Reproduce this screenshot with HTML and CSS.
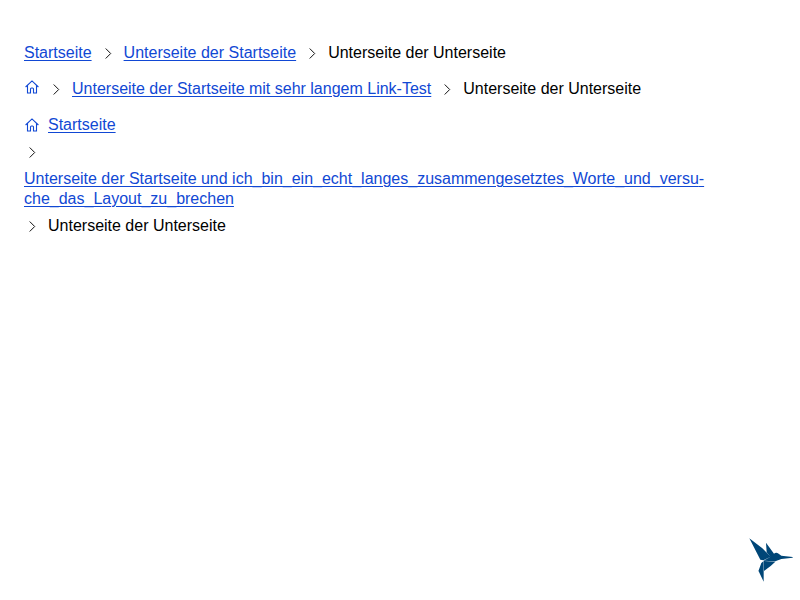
FILE: index.html
```html
<!DOCTYPE html>
<html lang="de">
<head>
<meta charset="utf-8">
<title>Breadcrumb</title>
<link rel="stylesheet" href="styles.css">
</head>
<body>
<svg class="sprite" aria-hidden="true">
  <symbol id="chevron" viewBox="0 0 16 16"><path d="M5.700 3.500 10.700 8.500 5.700 13.500"/></symbol>
  <symbol id="home" viewBox="0 0 16 16"><path d="M1.600 8 8 1.900 14.400 8M3.500 6.500V14H6.500V10Q6.500 9 7.500 9H8.500Q9.500 9 9.500 10V14H12.500V6.500"/></symbol>
</svg>
<main class="page">
  <nav aria-label="Seitenpfad">
    <ol class="breadcrumb">
      <li class="item"><a class="link" href="#">Startseite</a></li>
      <li class="item"><svg class="icon"><use href="#chevron"/></svg><a class="link" href="#">Unterseite der Startseite</a></li>
      <li class="item"><svg class="icon"><use href="#chevron"/></svg><span>Unterseite der Unterseite</span></li>
    </ol>
  </nav>
  <nav aria-label="Seitenpfad mit Symbol">
    <ol class="breadcrumb">
      <li class="item"><a class="link icon-link" href="#" aria-label="Startseite"><svg class="icon home"><use href="#home"/></svg></a></li>
      <li class="item"><svg class="icon"><use href="#chevron"/></svg><a class="link" href="#">Unterseite der Startseite mit sehr langem Link-Test</a></li>
      <li class="item"><svg class="icon"><use href="#chevron"/></svg><span>Unterseite der Unterseite</span></li>
    </ol>
  </nav>
  <nav aria-label="Langer Seitenpfad">
    <ol class="breadcrumb">
      <li class="item"><svg class="icon home"><use href="#home"/></svg><a class="link" href="#">Startseite</a></li>
      <li class="item wrapping"><svg class="icon"><use href="#chevron"/></svg><a class="link" href="#">Unterseite der Startseite und ich_bin_ein_echt_langes_zusammengesetztes_Worte_und_versu&shy;che_das_Layout_zu_brechen</a></li>
      <li class="item"><svg class="icon"><use href="#chevron"/></svg><span>Unterseite der Unterseite</span></li>
    </ol>
  </nav>
</main>
<svg class="logo" viewBox="0 0 180 180" role="img" aria-label="Kolibri">
  <path d="M28 25 67 55 92 80 70 91 61 89ZM78 38 102 71 92 80 80 67ZM91 81 102 71Q108 66 116 71L124 77 158 81V83L124 87 106 94 70 92ZM72 93 106 95 92 108 72 123ZM71 93V123L55 124 64 99ZM56 124 71 123V155Z"/>
</svg>
</body>
</html>
```
FILE: styles.css
```css
body {
  margin: 0;
  background: #fff;
  color: #000;
  font: 16px/20px "Liberation Sans", Arial, sans-serif;
}

.sprite {
  display: none;
}

.page {
  display: flex;
  flex-direction: column;
  gap: 16px;
  padding: 43px 24px;
}

.breadcrumb {
  display: flex;
  flex-wrap: wrap;
  gap: 7px 8px;
  margin: 0;
  padding: 0;
  list-style: none;
}

.item {
  display: flex;
  align-items: center;
  gap: 7px 8px;
}

.wrapping {
  flex-wrap: wrap;
}

.link {
  color: #1148d4;
  text-decoration: underline;
  text-decoration-thickness: 1px;
  text-underline-offset: 2px;
}

.icon-link {
  display: flex;
  align-self: flex-start;
}

.icon {
  flex: none;
  width: 16px;
  height: 16px;
  fill: none;
  stroke: #111;
  stroke-width: 1;
}

.wrapping .icon {
  height: 20px;
}

.home {
  stroke: #1148d4;
  stroke-width: 1.1;
}

.logo {
  position: fixed;
  right: 0;
  bottom: 10px;
  width: 60px;
  height: 60px;
  fill: #004677;
}
```
